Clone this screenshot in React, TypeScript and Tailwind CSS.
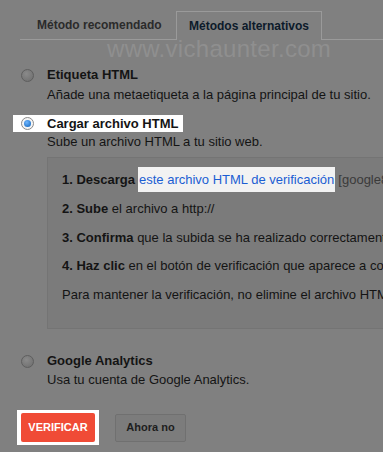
import React from "react";

function Radio({ checked }: { checked?: boolean }) {
  if (checked) {
    return (
      <span className="flex h-[13px] w-[13px] items-center justify-center rounded-full border border-[#8a8a8a] bg-[#f4f4f4]">
        <span className="h-[7px] w-[7px] rounded-full bg-[radial-gradient(circle_at_40%_35%,#6fb6ff,#0a5fb8)]" />
      </span>
    );
  }
  return (
    <span className="block h-[13px] w-[13px] rounded-full border border-[#5e5e5e] bg-[radial-gradient(circle_at_40%_35%,#8a8a8a,#6c6c6c)]" />
  );
}

export default function App() {
  return (
    <div
      className="relative h-[452px] w-[383px] overflow-hidden bg-[#808080] text-[13px] text-[#141414]"
      style={{ fontFamily: '"Liberation Sans", Arial, sans-serif' }}
    >
      {/* Tabs */}
      <div className="ml-[20px] flex h-[40px] border-b border-[#9a9a9a] pt-[11px]">
        <div className="flex h-[28px] w-[156px] items-center pl-[17px] text-[12px] font-bold text-[#2b2b2b]">
          Método recomendado
        </div>
        <div className="-mb-px flex h-[29px] w-[146px] items-center justify-center border border-b-0 border-[#9a9a9a] bg-[#808080] text-[12px] font-bold text-[#0c1a2a]">
          Métodos alternativos
        </div>
      </div>

      {/* Watermark */}
      <div className="pointer-events-none absolute left-[107px] top-[35px] text-[24px] leading-[28px] tracking-[0.3px] text-[#8f8f8f]">
        www.vichaunter.com
      </div>

      {/* Option 1 */}
      <div className="mt-[27px] flex">
        <div className="w-[47px] pl-[21px] pt-[2px]">
          <Radio />
        </div>
        <div>
          <div className="font-bold leading-[16px]">Etiqueta HTML</div>
          <div className="mt-[4px] leading-[16px]">Añade una metaetiqueta a la página principal de tu sitio.</div>
        </div>
      </div>

      {/* Option 2 */}
      <div className="mt-[12px] flex flex-col">
        <div className="ml-[13px] flex h-[17px] w-[170px] items-center bg-white">
          <div className="w-[34px] pl-[8px]">
            <Radio checked />
          </div>
          <div className="font-bold leading-[16px]">Cargar archivo HTML</div>
        </div>
        <div className="ml-[47px] mt-[2px] leading-[16px]">Sube un archivo HTML a tu sitio web.</div>
      </div>

      {/* Instructions box */}
      <div className="ml-[47px] mt-[7px] h-[172px] whitespace-nowrap border border-r-0 border-[#747474] bg-[#7b7b7b] pl-[14px] pt-[9px]">
        <div className="flex h-[25px] items-center">
          <span className="font-bold">1. Descarga</span>
          <span className="ml-[3px] flex h-[25px] items-center bg-[#f2f2f2] px-[1px] text-[#1b5ed3]">
            este archivo HTML de verificación
          </span>
          <span className="ml-[3px] text-[#3a3a3a]">[google8</span>
        </div>
        <div className="mt-[5px] h-[24px] leading-[24px]">
          <span className="font-bold">2. Sube</span> el archivo a http://
        </div>
        <div className="mt-[5px] h-[24px] leading-[24px]">
          <span className="font-bold">3. Confirma</span> que la subida se ha realizado correctamente
        </div>
        <div className="mt-[4px] h-[24px] leading-[24px]">
          <span className="font-bold">4. Haz clic</span> en el botón de verificación que aparece a continuación
        </div>
        <div className="mt-[5px] h-[24px] leading-[24px]">
          Para mantener la verificación, no elimine el archivo HTML
        </div>
      </div>

      {/* Option 3 */}
      <div className="mt-[24px] flex">
        <div className="w-[47px] pl-[21px] pt-[2px]">
          <Radio />
        </div>
        <div>
          <div className="font-bold leading-[16px]">Google Analytics</div>
          <div className="mt-[3px] leading-[16px]">Usa tu cuenta de Google Analytics.</div>
        </div>
      </div>

      {/* Buttons */}
      <div className="mt-[22px] flex items-center">
        <div className="ml-[17px] flex h-[35px] w-[82px] items-center justify-center bg-white">
          <div className="flex h-[29px] w-[74px] items-center justify-center rounded-[2px] bg-[#f04b36] text-[11px] font-bold text-white">
            VERIFICAR
          </div>
        </div>
        <div className="ml-[16px] flex h-[28px] w-[71px] items-center justify-center rounded-[2px] border border-[#707070] bg-[#7c7c7c] text-[11px] font-bold text-[#1e1e1e]">
          Ahora no
        </div>
      </div>
    </div>
  );
}
